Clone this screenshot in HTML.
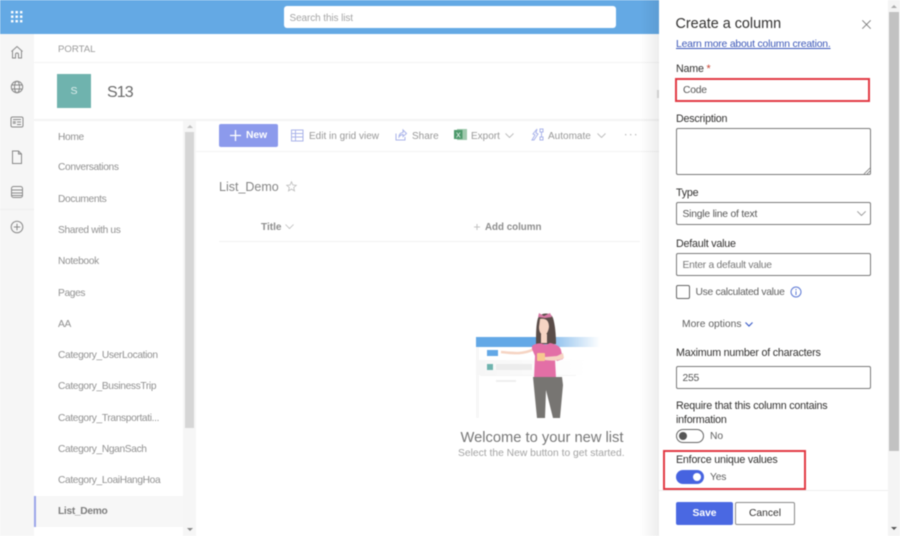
<!DOCTYPE html>
<html><head><meta charset="utf-8"><style>
*{box-sizing:border-box}
html,body{margin:0;padding:0;width:900px;height:536px;overflow:hidden;background:#fff}
body{font-family:"Liberation Sans",sans-serif;position:relative}
#r{position:absolute;left:0;top:0;width:900px;height:536px;overflow:hidden;filter:blur(.4px)}
.a{position:absolute;white-space:nowrap}
.n{position:absolute;left:58px;font-size:10.2px;letter-spacing:-.35px;color:#919191;line-height:14px;white-space:nowrap}
.c{font-size:10px;color:#989898;line-height:14px}
.l{position:absolute;left:676px;font-size:10.7px;letter-spacing:-.2px;color:#323130;line-height:14px;white-space:nowrap}
.i{position:absolute;left:676px;width:195px;height:23px;border:1px solid #7a7a7a;border-radius:2px;background:#fff;font-size:10.3px;letter-spacing:-.2px;line-height:23px;padding-left:5.500px;color:#555;white-space:nowrap}
svg{position:absolute;overflow:visible}
</style></head><body><div id="r">
<div class="a" style="left:0;top:0;width:660px;height:34px;background:#64a9e4"></div>
<svg style="left:11px;top:11px" width="12" height="12" fill="#fff"><rect x="0" y="0" width="2.400" height="2.400"/><rect x="4.500" y="0" width="2.400" height="2.400"/><rect x="9" y="0" width="2.400" height="2.400"/><rect x="0" y="4.500" width="2.400" height="2.400"/><rect x="4.500" y="4.500" width="2.400" height="2.400"/><rect x="9" y="4.500" width="2.400" height="2.400"/><rect x="0" y="9" width="2.400" height="2.400"/><rect x="4.500" y="9" width="2.400" height="2.400"/><rect x="9" y="9" width="2.400" height="2.400"/></svg>
<div class="a" style="left:284px;top:6px;width:332px;height:22px;background:#fff;border-radius:3px;font-size:10px;letter-spacing:-.1px;line-height:25px;padding-left:5.500px;color:#a5a5a5">Search this list</div>

<div class="a" style="left:0;top:34px;width:34px;height:502px;background:#f6f6f6"></div>
<svg style="left:10px;top:45px" width="14" height="14" fill="none" stroke="#8a8a8a" stroke-width="1"><path d="M1.500 6.500 7 1.500l5.500 5M2.500 6v7h3V9.500a1.500 1.500 0 0 1 3 0V13h3V6"/></svg>
<svg style="left:10px;top:80px" width="14" height="14" fill="none" stroke="#8a8a8a" stroke-width="1"><circle cx="7" cy="7" r="5.700"/><ellipse cx="7" cy="7" rx="2.500" ry="5.700"/><path d="M1.500 5h11M1.500 9h11"/></svg>
<svg style="left:10px;top:115px" width="14" height="14" fill="none" stroke="#8a8a8a" stroke-width="1"><rect x="1" y="2" width="12" height="10" rx="1.500"/><rect x="2.800" y="6" width="3" height="3" fill="#aaa" stroke="none"/><path d="M3 4.500h8M7 7h4M7 9.500h4"/></svg>
<svg style="left:10px;top:150px" width="14" height="14" fill="none" stroke="#8a8a8a" stroke-width="1"><path d="M2.500 1h6l3 3v9.500h-9zM8.500 1v3h3"/></svg>
<svg style="left:10px;top:185px" width="14" height="14" fill="none" stroke="#8a8a8a" stroke-width="1"><rect x="1.500" y="1.500" width="11" height="11" rx="2"/><path d="M1.500 5h11M1.500 8h11M1.500 10.500h11"/></svg>
<div class="a" style="left:0;top:209px;width:34px;height:1px;background:#efefef"></div>
<svg style="left:10px;top:220px" width="14" height="14" fill="none" stroke="#8a8a8a" stroke-width="1"><circle cx="7" cy="7" r="5.800"/><path d="M7 3.800v6.400M3.800 7h6.400"/></svg>

<div class="a" style="left:58px;top:42.500px;font-size:9.600px;line-height:13px;color:#9a9a9a">PORTAL</div>
<div class="a" style="left:34px;top:62px;width:626px;height:1px;background:#f4f4f4"></div>
<div class="a" style="left:57px;top:74px;width:34px;height:34px;background:#6fb3ae;color:#dfeeed;font-size:10.500px;line-height:35px;text-align:center">S</div>
<div class="a" style="left:107px;top:83px;font-size:16px;letter-spacing:-.9px;line-height:19px;color:#6a6a6a">S13</div>
<div class="a" style="left:34px;top:119px;width:626px;height:2px;background:#f4f4f4"></div>
<div class="a" style="left:657px;top:90px;width:2px;height:8px;background:#ddd"></div>

<div class="n" style="top:130.500px">Home</div>
<div class="n" style="top:161px">Conversations</div>
<div class="n" style="top:192.500px">Documents</div>
<div class="n" style="top:224px">Shared with us</div>
<div class="n" style="top:255px">Notebook</div>
<div class="n" style="top:286.500px">Pages</div>
<div class="n" style="top:318px">AA</div>
<div class="n" style="top:349px">Category_UserLocation</div>
<div class="n" style="top:380px">Category_BusinessTrip</div>
<div class="n" style="top:411.500px">Category_Transportati...</div>
<div class="n" style="top:443px">Category_NganSach</div>
<div class="n" style="top:474px">Category_LoaiHangHoa</div>
<div class="a" style="left:34px;top:496px;width:149px;height:31px;background:#f7f7f7"></div>
<div class="a" style="left:34px;top:496px;width:1.500px;height:31px;background:#9aa5ea"></div>
<div class="n" style="top:505px;font-weight:bold;color:#7d7d7d;font-size:10.200px;letter-spacing:-.3px">List_Demo</div>
<div class="a" style="left:183px;top:121px;width:13px;height:415px;background:#f6f6f6"></div>
<div class="a" style="left:185px;top:132px;width:9px;height:296px;background:#d6d6d6"></div>
<div class="a" style="left:186.500px;top:125px;border:3px solid transparent;border-bottom:3px solid #c0c0c0;border-top:0"></div>
<div class="a" style="left:186.500px;top:528px;border:3px solid transparent;border-top:3px solid #888;border-bottom:0"></div>

<div class="a" style="left:196px;top:151px;width:464px;height:1px;background:#f3f3f3"></div>
<div class="a" style="left:219px;top:124px;width:59px;height:23px;background:#8c9aec;border-radius:2px"></div>
<svg style="left:230px;top:130px" width="11" height="11" stroke="#fff" stroke-width="1.300"><path d="M5.500 0v11M0 5.500h11"/></svg>
<div class="a" style="left:246px;top:129px;font-size:10.300px;line-height:14px;color:#fff;font-weight:bold">New</div>
<svg style="left:291px;top:129px" width="13" height="13" fill="none" stroke="#aab4ea" stroke-width="1"><rect x=".5" y="1" width="11.500" height="11"/><path d="M.5 4.500h11.500M.5 8h11.500M4.500 1v11"/></svg>
<div class="a c" style="left:309px;top:129.500px">Edit in grid view</div>
<svg style="left:395px;top:129px" width="12" height="12" fill="none" stroke="#aab4ea" stroke-width="1"><path d="M1 4.500v6.500h9V8M4 8c0-3 2-4.500 4-4.500V1l3.500 3.500L8 7.500V5.500C6.500 5.500 5 6.500 4 8z"/></svg>
<div class="a c" style="left:412px;top:129.500px">Share</div>
<svg style="left:454px;top:128px" width="13" height="13"><rect x="3" y="1" width="10" height="11" fill="#9fc9ad"/><rect x="0" y="2" width="8.500" height="9" fill="#4e9a6c"/><text x="2" y="9.500" font-size="7" fill="#fff" font-family="Liberation Sans">X</text></svg>
<div class="a c" style="left:471px;top:129.500px">Export</div>
<svg style="left:505px;top:133px" width="9" height="5" fill="none" stroke="#bbb" stroke-width=".9"><path d="M.5.5l4 4 4-4"/></svg>
<svg style="left:531px;top:128px" width="13" height="13" fill="none" stroke="#aab4ea"><path d="M1 12l3-5-2-1 4-5-1 4 2 1-4 6zM9 1h3v3H9zM9 9h3v3H9zM10.500 4v5"/></svg>
<div class="a c" style="left:548px;top:129.500px">Automate</div>
<svg style="left:597px;top:133px" width="9" height="5" fill="none" stroke="#bbb" stroke-width=".9"><path d="M.5.5l4 4 4-4"/></svg>
<svg style="left:625px;top:134px" width="12" height="2" fill="#bbb"><rect width="1.300" height="1.300"/><rect x="5" width="1.300" height="1.300"/><rect x="10" width="1.300" height="1.300"/></svg>

<div class="a" style="left:219px;top:180px;font-size:12.500px;line-height:15px;color:#858585">List_Demo</div>
<svg style="left:286px;top:181px" width="11" height="11" fill="none" stroke="#bbb" stroke-width=".8"><path d="M5.500.8l1.400 3.200 3.400.3-2.600 2.200.8 3.400-3-1.800-3 1.800.8-3.400L.7 4.300 4.100 4z"/></svg>
<div class="a" style="left:261px;top:220px;font-size:10.500px;line-height:14px;color:#8d8d8d;font-weight:bold;transform:scaleX(.96);transform-origin:left">Title</div>
<svg style="left:285px;top:224px" width="9" height="5" fill="none" stroke="#bbb" stroke-width=".8"><path d="M.5.5l4 4 4-4"/></svg>
<svg style="left:474px;top:224px" width="6" height="6" stroke="#c4c4c4"><path d="M3 0v6M0 3h6"/></svg>
<div class="a" style="left:485px;top:220px;font-size:10.500px;line-height:14px;color:#8d8d8d;font-weight:bold;transform:scaleX(.93);transform-origin:left">Add column</div>
<div class="a" style="left:219px;top:241px;width:421px;height:1px;background:#f2f2f2"></div>

<!-- illustration -->
<div class="a" style="left:476px;top:337px;width:124px;height:10px;background:linear-gradient(90deg,#63a8e6 0,#63a8e6 48%,#fff 100%)"></div>
<div class="a" style="left:487px;top:350px;width:11px;height:6px;background:#63a8e6"></div>
<div class="a" style="left:476px;top:347px;width:3px;height:71px;background:#f7f7f7"></div>
<div class="a" style="left:476px;top:360px;width:110px;height:15px;background:linear-gradient(90deg,#f6f6f6,#fff)"></div>
<div class="a" style="left:487px;top:364px;width:6px;height:6px;background:#6fb3ae"></div>
<div class="a" style="left:496px;top:364px;width:36px;height:6px;background:#ececec"></div>
<div class="a" style="left:480px;top:375px;width:96px;height:1px;background:#f5f5f5"></div>
<div class="a" style="left:496px;top:380px;width:20px;height:2px;background:#efefef"></div>
<svg style="left:500px;top:310px" width="70" height="110">
<path d="M38 8c3-6 13-6 15 0 2 6 3 17 3 26H36c0-9 0-20 2-26z" fill="#5a4c48"/>
<path d="M39 3l5 3 6-3 2 4-7 1-7-1z" fill="#d77aa5"/>
<path d="M40 9c5-1 9 1 9 8-1 6-3 8-5 8-3 0-5-3-5-8z" fill="#f6d4c3"/>
<rect x="41" y="24" width="6" height="9" fill="#f6d4c3"/>
<path d="M1 42c10 1 22 3 33-3" fill="none" stroke="#f6d4c3" stroke-width="2.500"/>
<path d="M32 36c4-3 8-3 11-2 3 1 3 1 7-1 5 1 10 3 11 7l2 9-6 2-2-2 1 19H34l1-22-3-7z" fill="#e36fa6"/>
<rect x="37" y="43" width="8" height="8" rx="1" fill="#f7c98f"/>
<path d="M45 50c6 1 14 1 19-2l-1-5-6 3-12 1z" fill="#f6d4c3"/>
<path d="M33 67h29l1 8-3 33h-7l-7-28-1 28h-8z" fill="#777572"/>
</svg>
<div class="a" style="left:460.500px;top:429.500px;font-size:14.700px;line-height:16px;color:#777">Welcome to your new list</div>
<div class="a" style="left:458px;top:446.500px;font-size:10.300px;line-height:14px;color:#a3a3a3">Select the New button to get started.</div>

<!-- panel -->
<div class="a" style="left:640px;top:0;width:19px;height:536px;background:linear-gradient(90deg,rgba(0,0,0,0),rgba(0,0,0,.07))"></div>
<div class="a" style="left:659px;top:0;width:241px;height:536px;background:#fff"></div>
<div class="a" style="left:888px;top:0;width:12px;height:536px;background:#f4f4f4"></div>
<div class="a" style="left:889px;top:12px;width:10px;height:439px;background:#c2c2c2"></div>
<div class="a" style="left:891px;top:5px;border:3px solid transparent;border-bottom:3px solid #aaa;border-top:0"></div>
<div class="a" style="left:891px;top:527px;border:3px solid transparent;border-top:3px solid #555;border-bottom:0"></div>

<div class="a" style="left:675.500px;top:15px;font-size:14.400px;line-height:18px;color:#323130">Create a column</div>
<svg style="left:862px;top:20px" width="9" height="9" stroke="#777" stroke-width=".8"><path d="M.3.3l8.400 8.400M8.700.3l-8.400 8.400"/></svg>
<div class="a" style="left:676px;top:37.500px;font-size:10.400px;letter-spacing:-.2px;line-height:14px;color:#3a56b8;text-decoration:underline">Learn more about column creation.</div>
<div class="l" style="top:62px">Name <span style="color:#c8402f">*</span></div>
<div class="i" style="top:78px;height:23.500px;border:2px solid #e23a44;left:675px;width:195px;border-radius:0;line-height:22.500px;padding-left:6px">Code</div>
<div class="l" style="top:112px">Description</div>
<div class="i" style="top:128px;height:47px"></div>
<svg style="left:864px;top:168px" width="6" height="6" stroke="#777" stroke-width=".8"><path d="M6 0L0 6M6 3L3 6"/></svg>
<div class="l" style="top:186px">Type</div>
<div class="i" style="top:202px">Single line of text</div>
<svg style="left:857px;top:211px" width="9" height="5" fill="none" stroke="#999" stroke-width=".9"><path d="M.3.3l4.200 4.200L8.700.3"/></svg>
<div class="l" style="top:236.500px">Default value</div>
<div class="i" style="top:253px;color:#777;letter-spacing:-.25px;line-height:24px">Enter a default value</div>
<div class="a" style="left:676px;top:284.500px;width:14px;height:14px;border:1px solid #666;border-radius:2px"></div>
<div class="a" style="left:695.500px;top:285.500px;font-size:10.300px;letter-spacing:-.3px;line-height:14px;color:#5f5f5f">Use calculated value</div>
<svg style="left:790px;top:286px" width="12" height="12" fill="none" stroke="#5d79d4" stroke-width="1"><circle cx="6" cy="6" r="5"/><path d="M6 5.200V9M6 3v1.200"/></svg>
<div class="a" style="left:682px;top:318px;font-size:10.300px;line-height:14px;color:#5f5f5f">More options</div>
<svg style="left:745px;top:322px" width="8" height="5" fill="none" stroke="#3f5fc9" stroke-width="1.200"><path d="M.5.5l3.500 3.500 3.500-3.500"/></svg>
<div class="l" style="top:346px">Maximum number of characters</div>
<div class="i" style="top:366px;line-height:24px">255</div>
<div class="l" style="top:399px">Require that this column contains</div>
<div class="l" style="top:413px">information</div>
<div class="a" style="left:676px;top:429px;width:28px;height:14px;border:1px solid #666;border-radius:7px;background:#fff"></div>
<div class="a" style="left:679px;top:432px;width:8px;height:8px;border-radius:50%;background:#555"></div>
<div class="a" style="left:710px;top:430px;font-size:10.300px;line-height:14px;color:#5f5f5f">No</div>
<div class="l" style="top:453px">Enforce unique values</div>
<div class="a" style="left:676px;top:470px;width:28px;height:14px;border-radius:7px;background:#4663e0"></div>
<div class="a" style="left:693px;top:473px;width:8px;height:8px;border-radius:50%;background:#fff"></div>
<div class="a" style="left:710px;top:471px;font-size:10.300px;letter-spacing:-.2px;line-height:14px;color:#5f5f5f">Yes</div>
<div class="a" style="left:662.500px;top:449.500px;width:143.500px;height:40px;border:2px solid #e23a44"></div>
<div class="a" style="left:659px;top:490px;width:229px;height:1px;background:#eee"></div>
<div class="a" style="left:676px;top:502px;width:57px;height:23px;background:#4a68e2;border-radius:2px;color:#fff;font-size:10.300px;font-weight:bold;line-height:23px;text-align:center">Save</div>
<div class="a" style="left:735px;top:502px;width:60px;height:23px;border:1px solid #8a8a8a;border-radius:2px;background:#fff;color:#323130;font-size:10.300px;line-height:22px;text-align:center">Cancel</div>
</div></body></html>
